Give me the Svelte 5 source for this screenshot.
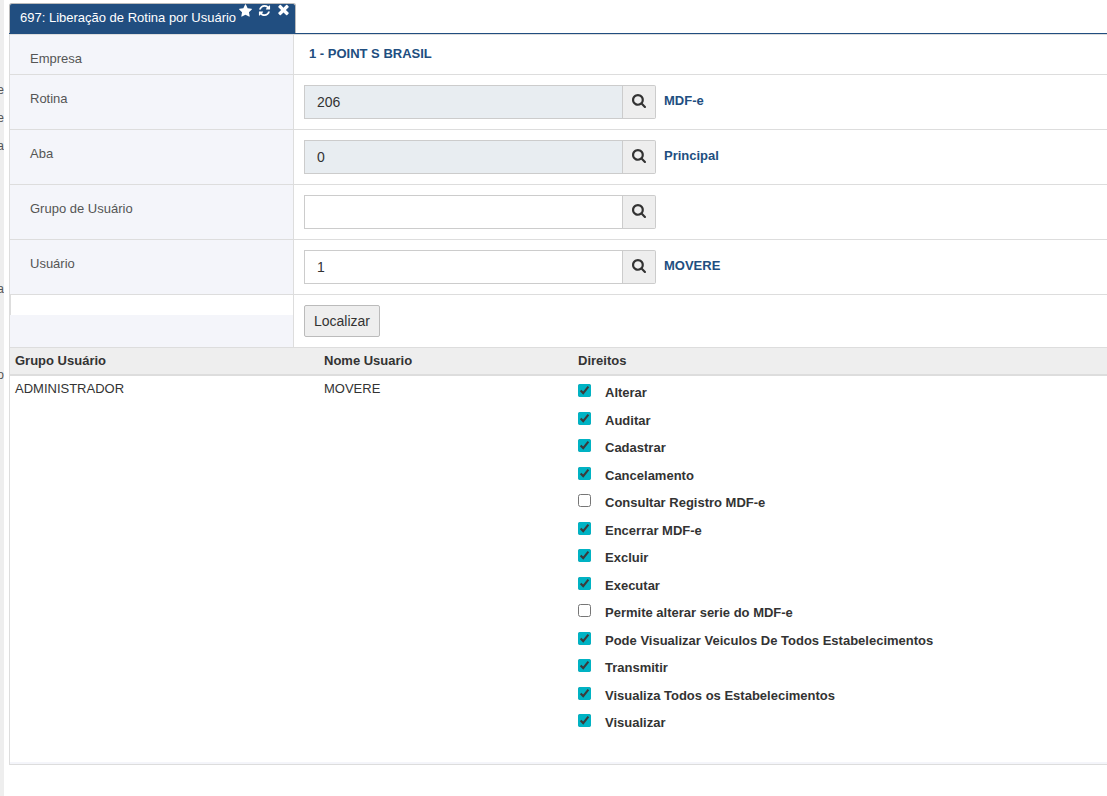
<script lang="ts">
  type Field = {
    id: string
    label: string
    value: string
    description: string
    readonly: boolean
  }

  type Right = {
    label: string
    checked: boolean
  }

  const menuItems = ['e', 'e', 'a', 'a', 'o']

  let fields = $state<Field[]>([
    { id: 'rotina', label: 'Rotina', value: '206', description: 'MDF-e', readonly: true },
    { id: 'aba', label: 'Aba', value: '0', description: 'Principal', readonly: true },
    { id: 'grupo', label: 'Grupo de Usuário', value: '', description: '', readonly: false },
    { id: 'usuario', label: 'Usuário', value: '1', description: 'MOVERE', readonly: false }
  ])

  let rights = $state<Right[]>([
    { label: 'Alterar', checked: true },
    { label: 'Auditar', checked: true },
    { label: 'Cadastrar', checked: true },
    { label: 'Cancelamento', checked: true },
    { label: 'Consultar Registro MDF-e', checked: false },
    { label: 'Encerrar MDF-e', checked: true },
    { label: 'Excluir', checked: true },
    { label: 'Executar', checked: true },
    { label: 'Permite alterar serie do MDF-e', checked: false },
    { label: 'Pode Visualizar Veiculos De Todos Estabelecimentos', checked: true },
    { label: 'Transmitir', checked: true },
    { label: 'Visualiza Todos os Estabelecimentos', checked: true },
    { label: 'Visualizar', checked: true }
  ])
</script>

<div class="page">
  <nav class="sidebar">
    {#each menuItems as item, i (i)}
      <span class="menu-item">{item}</span>
    {/each}
  </nav>

  <main>
    <header class="tabs">
      <div class="tab">
        <span class="tab-title">697: Liberação de Rotina por Usuário</span>
        <button class="tab-action" aria-label="Favoritar">
          <svg width="13" height="13" viewBox="0 0 1664 1664" aria-hidden="true">
            <path
              d="M1664 647q0 22-26 48l-363 354 86 500q1 7 1 20 0 21-10.5 35.5t-30.5 14.5q-19 0-40-12l-449-236-449 236q-22 12-40 12-21 0-31.5-14.5t-10.5-35.5q0-6 2-20l86-500-364-354q-25-27-25-48 0-37 56-46l502-73 225-455q19-41 49-41t49 41l225 455 502 73q56 9 56 46z"
            />
          </svg>
        </button>
        <button class="tab-action" aria-label="Atualizar">
          <svg width="13" height="13" viewBox="0 0 1792 1792" aria-hidden="true">
            <path
              d="M1639 1056q0 5-1 7-64 268-268 434.5t-478 166.5q-146 0-282.5-55t-243.5-157l-129 129q-19 19-45 19t-45-19-19-45v-448q0-26 19-45t45-19h448q26 0 45 19t19 45-19 45l-137 137q71 66 161 102t187 36q134 0 250-65t186-179q11-17 53-117 8-23 30-23h192q13 0 22.5 9.5t9.5 22.5zm25-800v448q0 26-19 45t-45 19h-448q-26 0-45-19t-19-45 19-45l138-138q-148-137-349-137-134 0-250 65t-186 179q-11 17-53 117-8 23-30 23h-199q-13 0-22.5-9.5t-9.5-22.5v-7q65-268 270-434.5t480-166.5q146 0 284 55.5t245 156.5l130-129q19-19 45-19t45 19 19 45z"
            />
          </svg>
        </button>
        <button class="tab-action" aria-label="Fechar">
          <svg width="13" height="13" viewBox="-36 274 1480 1480" aria-hidden="true">
            <path
              d="M1298 1322q0 40-28 68l-136 136q-28 28-68 28t-68-28l-294-294-294 294q-28 28-68 28t-68-28l-136-136q-28-28-28-68t28-68l294-294-294-294q-28-28-28-68t28-68l136-136q28-28 68-28t68 28l294 294 294-294q28-28 68-28t68 28l136 136q28 28 28 68t-28 68l-294 294 294 294q28 28 28 68z"
            />
          </svg>
        </button>
      </div>
    </header>

    <section class="panel">
      <div class="row">
        <div class="label">Empresa</div>
        <div class="content company">1 - POINT S BRASIL</div>
      </div>

      {#each fields as field (field.id)}
        <div class="row">
          <label class="label" for={field.id}>{field.label}</label>
          <div class="content">
            <div class="lookup">
              <input
                id={field.id}
                type="text"
                bind:value={field.value}
                readonly={field.readonly}
              />
              <button class="search" aria-label="Pesquisar {field.label}">
                <svg width="14" height="14" viewBox="64 128 1664 1664" aria-hidden="true">
                  <path
                    d="M1216 832q0-185-131.5-316.5t-316.5-131.5-316.5 131.5-131.5 316.5 131.5 316.5 316.5 131.5 316.5-131.5 131.5-316.5zm512 832q0 52-38 90t-90 38q-54 0-90-38l-343-342q-179 124-399 124-143 0-273.5-55.5t-225-150-150-225-55.5-273.5 55.5-273.5 150-225 225-150 273.5-55.5 273.5 55.5 225 150 150 225 55.5 273.5q0 220-124 399l343 343q37 37 37 90z"
                  />
                </svg>
              </button>
            </div>
            <span class="description">{field.description}</span>
          </div>
        </div>
      {/each}

      <div class="row">
        <div class="label blank"><div class="blank-field"></div></div>
        <div class="content"><button class="submit">Localizar</button></div>
      </div>

      <table>
        <thead>
          <tr>
            <th class="col-group">Grupo Usuário</th>
            <th class="col-name">Nome Usuario</th>
            <th>Direitos</th>
          </tr>
        </thead>
        <tbody>
          <tr>
            <td>ADMINISTRADOR</td>
            <td>MOVERE</td>
            <td>
              <div class="rights">
                {#each rights as right (right.label)}
                  <label class="right">
                    <input type="checkbox" bind:checked={right.checked} />
                    <span>{right.label}</span>
                  </label>
                {/each}
              </div>
            </td>
          </tr>
        </tbody>
      </table>
    </section>
  </main>
</div>

<style>
  :global(body) {
    margin: 0;
    background: #fff;
  }

  .page {
    display: grid;
    grid-template-columns: 4px minmax(0, 1fr);
    column-gap: 5px;
    min-height: 100vh;
    color: #333;
    font-family: 'Liberation Sans', Arial, sans-serif;
    font-size: 13px;
    line-height: 18px;
  }

  .page * {
    box-sizing: border-box;
  }

  button,
  input {
    font-family: inherit;
  }

  svg {
    display: block;
    fill: currentColor;
  }

  /* collapsed menu, only the ends of its labels stay in view */
  .sidebar {
    display: flex;
    flex-direction: column;
    gap: 10px;
    padding-top: 81px;
    overflow: hidden;
    background: #eee;
    color: #555;
    font-size: 12px;
  }

  .menu-item {
    display: flex;
    justify-content: flex-end;
  }

  .menu-item:nth-child(4) {
    margin-top: 115px;
  }

  .menu-item:nth-child(5) {
    margin-top: 58px;
  }

  .tabs {
    display: flex;
    padding-top: 3px;
    border-bottom: 1px solid #214e80;
  }

  .tab {
    display: flex;
    align-items: flex-start;
    height: 30px;
    padding: 0 5px 0 10px;
    border: 1px solid #bbb;
    border-bottom: 0;
    border-radius: 3px 3px 0 0;
    background: #214e80;
    color: #fff;
  }

  .tab-title {
    padding: 5px 3px 0 0;
  }

  .tab-action {
    margin-right: 6px;
    padding: 0;
    border: 0;
    background: none;
    color: inherit;
    cursor: pointer;
  }

  .tab-action:last-child {
    margin-right: 0;
  }

  .panel {
    padding-bottom: 2px;
    border: 1px solid #ddd;
    border-right: 0;
    background: #f4f5fa;
  }

  .row {
    display: grid;
    grid-template-columns: 284px minmax(0, 1fr);
    border-bottom: 1px solid #ddd;
    background: #fff;
  }

  .label {
    padding: 15px 20px 0;
    border-right: 1px solid #ddd;
    background: #f4f5fa;
    color: #555;
  }

  .content {
    display: flex;
    align-items: flex-start;
    padding: 10px;
  }

  .company,
  .description {
    color: #214e80;
    font-weight: bold;
  }

  .company {
    padding: 10px 15px 11px;
  }

  .lookup {
    display: flex;
    width: 352px;
    height: 34px;
  }

  .lookup input {
    flex: 1;
    min-width: 0;
    padding: 0 12px;
    border: 1px solid #ccc;
    border-radius: 0;
    background: #fff;
    color: #333;
    font-size: 14px;
  }

  .lookup input[readonly] {
    background: #e8edf1;
  }

  .search {
    width: 33px;
    padding: 0 0 3px 9px;
    border: 1px solid #ccc;
    border-left: 0;
    border-radius: 0 2px 2px 0;
    background: #eee;
    color: #333;
    cursor: pointer;
  }

  .description {
    padding: 7px 8px;
  }

  .blank {
    padding: 0;
  }

  .blank-field {
    height: 20px;
    border-left: 1px solid #ddd;
    background: #fff;
  }

  .submit {
    height: 32px;
    padding: 0 9px;
    border: 1px solid #bbb;
    border-radius: 2px;
    background: #eee;
    color: #333;
    font-size: 14px;
    cursor: pointer;
  }

  table {
    width: 100%;
    table-layout: fixed;
    border-collapse: separate;
    border-spacing: 0;
    background: #fff;
  }

  th,
  td {
    padding: 4px 5px;
    text-align: left;
    vertical-align: top;
  }

  th {
    border-bottom: 2px solid #ddd;
    background: #eee;
  }

  .col-group {
    width: 309px;
  }

  .col-name {
    width: 254px;
  }

  .rights {
    display: grid;
    grid-auto-rows: 1fr;
    height: 358px;
    margin-bottom: 20px;
  }

  .right {
    display: flex;
    align-items: flex-start;
    gap: 14px;
    font-weight: bold;
  }

  .right input {
    width: 13px;
    height: 13px;
    margin: 4px 0 0;
    accent-color: #00b3c4;
  }

  .right span {
    padding-top: 4px;
  }
</style>
